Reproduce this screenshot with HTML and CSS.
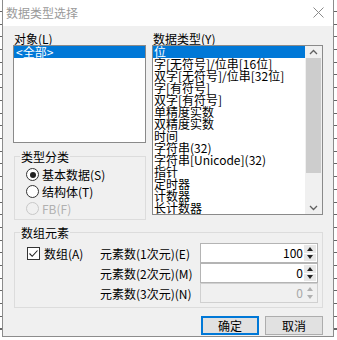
FILE: index.html
```html
<!DOCTYPE html>
<html lang="zh-CN">
<head>
<meta charset="utf-8">
<link rel="stylesheet" href="styles.css">
</head>
<body>
<div class="dlg">
  <div class="title">
    <span class="ttext">数据类型选择</span>
    <svg class="close" width="11" height="11" viewBox="0 0 11 11"><path d="M0.5 0.5 L10.5 10.5 M10.5 0.5 L0.5 10.5" stroke="#8a8a8a" stroke-width="1" fill="none"/></svg>
  </div>
  <div class="body">
    <div class="top">
      <div class="col left">
        <div class="lbl">对象(L)</div>
        <div class="list obj">
          <div class="item sel">&lt;全部&gt;</div>
        </div>
        <fieldset class="grp type">
          <legend>类型分类</legend>
          <div class="radio"><span class="rb on"></span><span>基本数据(S)</span></div>
          <div class="radio"><span class="rb"></span><span>结构体(T)</span></div>
          <div class="radio dis"><span class="rb"></span><span>FB(F)</span></div>
        </fieldset>
      </div>
      <div class="col right">
        <div class="lbl">数据类型(Y)</div>
        <div class="list types">
          <div class="items">
            <div class="item sel">位</div>
            <div class="item">字[无符号]/位串[16位]</div>
            <div class="item">双字[无符号]/位串[32位]</div>
            <div class="item">字[有符号]</div>
            <div class="item">双字[有符号]</div>
            <div class="item">单精度实数</div>
            <div class="item">双精度实数</div>
            <div class="item">时间</div>
            <div class="item">字符串(32)</div>
            <div class="item">字符串[Unicode](32)</div>
            <div class="item">指针</div>
            <div class="item">定时器</div>
            <div class="item">计数器</div>
            <div class="item">长计数器</div>
          </div>
          <div class="sb">
            <div class="sbtn"><svg width="9" height="6" viewBox="0 0 9 6"><path d="M1 5 L4.5 1.5 L8 5" stroke="#606060" stroke-width="1.3" fill="none"/></svg></div>
            <div class="thumb"></div>
            <div class="track"></div>
            <div class="sbtn"><svg width="9" height="6" viewBox="0 0 9 6"><path d="M1 1 L4.5 4.5 L8 1" stroke="#606060" stroke-width="1.3" fill="none"/></svg></div>
          </div>
        </div>
      </div>
    </div>
    <fieldset class="grp arr">
      <legend>数组元素</legend>
      <div class="arrgrid">
        <div class="chk"><span class="cb"><svg width="11" height="11" viewBox="0 0 11 11"><path d="M1.5 5.5 L4.2 8.3 L9.5 2.5" stroke="#222" stroke-width="1.1" fill="none"/></svg></span><span>数组(A)</span></div>
        <div class="elbl">元素数(1次元)(E)</div>
        <div class="spin"><span class="val">100</span><span class="arrows"><span class="up"></span><span class="dn"></span></span></div>
        <div></div>
        <div class="elbl">元素数(2次元)(M)</div>
        <div class="spin"><span class="val">0</span><span class="arrows"><span class="up"></span><span class="dn"></span></span></div>
        <div></div>
        <div class="elbl">元素数(3次元)(N)</div>
        <div class="spin dis"><span class="val">0</span><span class="arrows"><span class="up"></span><span class="dn"></span></span></div>
      </div>
    </fieldset>
    <div class="btns">
      <div class="btn def">确定</div>
      <div class="btn">取消</div>
    </div>
  </div>
</div>
</body>
</html>
```
FILE: styles.css
```css
html, body {
  margin: 0;
  padding: 0;
}
body {
  width: 337px;
  height: 340px;
  background: #fff repeating-linear-gradient(to bottom, transparent 0, transparent 11px, #666 11px, #666 12px, transparent 12px, transparent 12.7px);
  font-family: "Noto Sans CJK SC", "Noto Sans", sans-serif;
  font-size: 12px;
  color: #000;
  overflow: hidden;
}
.dlg {
  margin-left: 2px;
  width: 330px;
  height: 336px;
  border: 1px solid #8c8c8c;
  border-top: none;
  background: #f0f0f0;
  display: flex;
  flex-direction: column;
}
.title {
  height: 26px;
  background: #fff;
  display: flex;
  align-items: center;
  justify-content: space-between;
  padding: 0 9px 0 3px;
}
.ttext {
  color: #9a9a9a;
  font-size: 12px;
  line-height: 14px;
  margin-top: -1px;
}
.close {
  margin-top: -2px;
}
.body {
  padding: 6px 10px 0 10px;
}
.top {
  display: flex;
  gap: 6px;
}
.col {
  display: flex;
  flex-direction: column;
}
.col.left { width: 133px; }
.col.right { width: 171px; }
.lbl {
  line-height: 13px;
  height: 13px;
  padding-left: 1px;
  white-space: nowrap;
}
.list {
  background: #fff;
  border: 1px solid #8a8a8a;
  box-sizing: border-box;
}
.list.obj {
  height: 98px;
}
.list.types {
  height: 170px;
  display: flex;
}
.items {
  flex: 1;
  min-width: 0;
}
.item {
  height: 12px;
  line-height: 12px;
  padding-left: 1px;
  white-space: nowrap;
}
.obj .item { padding-left: 2px; }
.item.sel {
  background: #0078d7;
  color: #fff;
}
.sb {
  width: 17px;
  flex: none;
  display: flex;
  flex-direction: column;
  background: #f0f0f0;
}
.sbtn {
  height: 12px;
  display: flex;
  align-items: center;
  justify-content: center;
}
.thumb {
  height: 115px;
  background: #cdcdcd;
  margin: 0 1px;
}
.track { flex: 1; }
.grp {
  margin: 0;
  border: 1px solid #dcdcdc;
  padding: 0;
  min-width: 0;
}
.grp legend {
  padding: 0 1px;
  line-height: 13px;
  height: 13px;
}
.type {
  margin-top: 7px;
  margin-left: 1px;
  height: 70px;
  box-sizing: border-box;
  padding: 3px 0 0 11px;
}
.type legend { margin-left: -6px; }
.radio {
  display: flex;
  align-items: center;
  height: 17px;
  gap: 3px;
  white-space: nowrap;
}
.rb {
  width: 11px;
  height: 11px;
  border: 1px solid #333;
  border-radius: 50%;
  background: #fff;
  position: relative;
  flex: none;
}
.rb.on::after {
  content: "";
  position: absolute;
  left: 2.5px;
  top: 2.5px;
  width: 6px;
  height: 6px;
  border-radius: 50%;
  background: #222;
}
.radio.dis { color: #b0b0b0; }
.radio.dis .rb { border-color: #c8c8c8; background: #f0f0f0; }
.arr {
  margin-top: 6px;
  margin-left: 1px;
  width: 309px;
  box-sizing: border-box;
  padding: 4px 4px 4px 12px;
}
.arr legend { margin-left: -7px; }
.arrgrid {
  display: grid;
  grid-template-columns: 73px 100px 118px;
  grid-auto-rows: 20px;
  align-items: center;
}
.chk {
  display: flex;
  align-items: center;
  gap: 4px;
  white-space: nowrap;
}
.cb {
  width: 11px;
  height: 11px;
  border: 1px solid #333;
  background: #fff;
  display: flex;
  align-items: center;
  justify-content: center;
}
.elbl { white-space: nowrap; }
.spin {
  height: 20px;
  box-sizing: border-box;
  border: 1px solid #b4b4b4;
  background: #fff;
  display: flex;
  align-items: stretch;
}
.spin .val {
  flex: 1;
  text-align: right;
  line-height: 18px;
  padding-right: 1px;
}
.arrows {
  width: 12px;
  display: flex;
  flex-direction: column;
  gap: 1px;
  padding: 1px 0;
  margin-right: 1px;
}
.arrows span {
  flex: 1;
  background: #e8e8e8;
  display: flex;
  align-items: center;
  justify-content: center;
}
.arrows .up::after, .arrows .dn::after {
  content: "";
  border-left: 3.5px solid transparent;
  border-right: 3.5px solid transparent;
}
.arrows .up::after { border-bottom: 4px solid #222; }
.arrows .dn::after { border-top: 4px solid #222; }
.spin.dis {
  background: #f0f0f0;
  border-color: #d0d0d0;
  color: #a8a8a8;
}
.spin.dis .arrows span { background: #f0f0f0; }
.spin.dis .arrows .up::after { border-bottom-color: #b0b0b0; }
.spin.dis .arrows .dn::after { border-top-color: #b0b0b0; }
.btns {
  display: flex;
  justify-content: flex-end;
  gap: 6px;
  margin-top: 8px;
}
.btn {
  width: 58px;
  height: 19px;
  box-sizing: border-box;
  border: 1px solid #adadad;
  background: #e1e1e1;
  text-align: center;
  line-height: 17px;
}
.btn.def {
  border: 2px solid #0078d7;
  line-height: 15px;
}
```
